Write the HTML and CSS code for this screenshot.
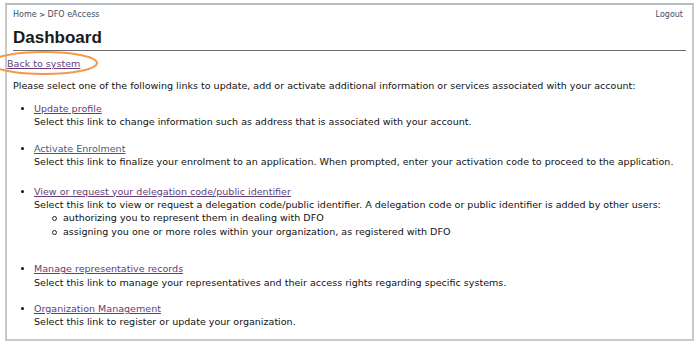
FILE: index.html
```html
<!DOCTYPE html>
<html>
<head>
<meta charset="utf-8">
<link rel="stylesheet" href="styles.css">
</head>
<body>
<div class="frame">
  <div class="topbar">
    <div class="crumbs"><a href="#">Home</a> <span class="sep">&gt;</span> <a href="#">DFO eAccess</a></div>
    <a class="logout" href="#">Logout</a>
  </div>
  <h1 class="title">Dashboard</h1>
  <div class="back"><a href="#" class="visited">Back to system</a></div>
  <p class="intro">Please select one of the following links to update, add or activate additional information or services associated with your account:</p>
  <ul class="links">
    <li><a href="#" class="visited">Update profile</a><br>Select this link to change information such as address that is associated with your account.</li>
    <li class="mid"><a href="#" class="fresh">Activate Enrolment</a><br>Select this link to finalize your enrolment to an application. When prompted, enter your activation code to proceed to the application.</li>
    <li class="tall"><a href="#" class="visited">View or request your delegation code/public identifier</a><br>Select this link to view or request a delegation code/public identifier. A delegation code or public identifier is added by other users:
      <ul class="sub">
        <li>authorizing you to represent them in dealing with DFO</li>
        <li>assigning you one or more roles within your organization, as registered with DFO</li>
      </ul>
    </li>
    <li><a href="#" class="visited">Manage representative records</a><br>Select this link to manage your representatives and their access rights regarding specific systems.</li>
    <li><a href="#" class="visited">Organization Management</a><br>Select this link to register or update your organization.</li>
  </ul>
  <svg class="callout" width="120" height="30" viewBox="0 0 120 30"><ellipse cx="57" cy="15" rx="53" ry="11" fill="none" stroke="#f29a4c" stroke-width="2"/></svg>
</div>
</body>
</html>
```
FILE: styles.css
```css
html, body { margin: 0; padding: 0; background: #fff; }
body { font-family: "DejaVu Sans", Verdana, sans-serif; font-size: 9.55px; color: #111; }
.frame {
  position: relative;
  margin: 3px 6px 0 5px;
  height: 338px;
  border: 2px solid #c8c8c8;
  border-top-color: #b4bcc4;
  box-sizing: border-box;
}
.topbar { display: flex; justify-content: space-between; padding: 5px 9px 0 6px; font-size: 8px; line-height: 10px; }
.topbar a { color: #3d4f6a; text-decoration: none; }
.crumbs .sep { color: #3d4f6a; font-weight: bold; font-size: 7px; }
.title {
  font-family: "Liberation Sans", Arial, sans-serif;
  font-size: 17px; font-weight: bold; color: #1a1a1a;
  margin: 8px 6px 0 6px; padding-bottom: 2px;
  border-bottom: 1px solid #6e6e6e;
  line-height: 20px;
}
.back { margin-top: 7px; padding-left: 0; line-height: 12px; }
a.visited { color: #663d7a; }
a.fresh { color: #3a5f85; }
.intro { margin: 10px 0 0 6px; line-height: 12px; }
.links { margin: 10px 0 0 0; padding: 0 0 0 27px; line-height: 13.4px; }
.links > li { margin-bottom: 13px; }
.links > li.mid { margin-bottom: 16px; }
.links > li.tall { margin-bottom: 24px; }
.sub { list-style: none; margin: 0; padding-left: 29px; }
.sub li { position: relative; }
.sub li::before {
  content: ""; position: absolute; left: -11px; top: 5px;
  width: 3px; height: 3px; border: 1px solid #222; border-radius: 50%;
}
.callout { position: absolute; left: -20px; top: 43px; }
```
